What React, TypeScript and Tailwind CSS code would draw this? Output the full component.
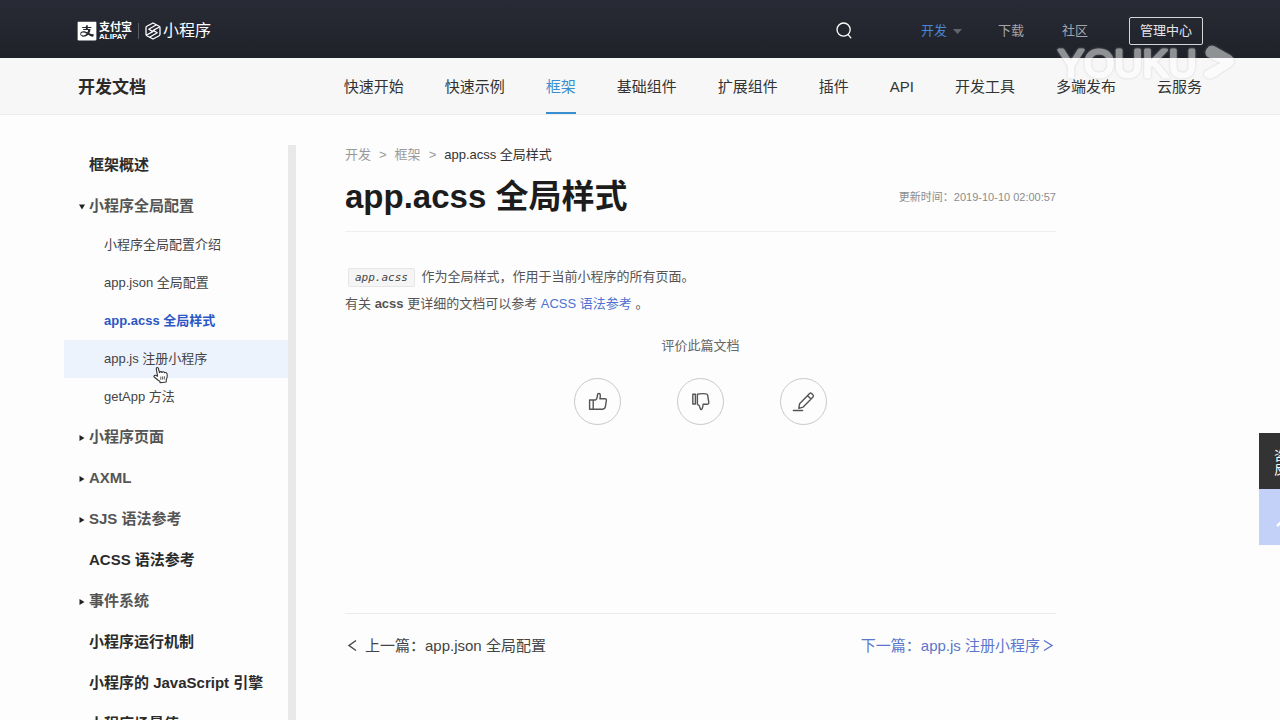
import { AiFillAlipaySquare } from "react-icons/ai";

type Doc = {
  title: string;
  kind: "page" | "open" | "closed";
  children?: string[];
};

const tabs = [
  "快速开始",
  "快速示例",
  "框架",
  "基础组件",
  "扩展组件",
  "插件",
  "API",
  "开发工具",
  "多端发布",
  "云服务",
];

const docs: Doc[] = [
  { title: "框架概述", kind: "page" },
  {
    title: "小程序全局配置",
    kind: "open",
    children: [
      "小程序全局配置介绍",
      "app.json 全局配置",
      "app.acss 全局样式",
      "app.js 注册小程序",
      "getApp 方法",
    ],
  },
  { title: "小程序页面", kind: "closed" },
  { title: "AXML", kind: "closed" },
  { title: "SJS 语法参考", kind: "closed" },
  { title: "ACSS 语法参考", kind: "page" },
  { title: "事件系统", kind: "closed" },
  { title: "小程序运行机制", kind: "page" },
  { title: "小程序的 JavaScript 引擎", kind: "page" },
  { title: "小程序场景值", kind: "page" },
];

const activeDoc = "app.acss 全局样式";
const hoveredDoc = "app.js 注册小程序";

function Logo() {
  return (
    <a href="#" className="flex items-center text-white">
      <AiFillAlipaySquare className="-ml-0.5 size-6" />
      <span className="flex flex-col">
        <span className="text-[11px] leading-3 font-bold">支付宝</span>
        <span className="text-[8px] leading-2 font-bold">ALIPAY</span>
      </span>
      <span className="mx-1.5 h-4 w-px bg-[#5a5c64]" />
      <svg
        viewBox="0 0 16 18"
        className="h-[18px] w-4"
        fill="none"
        stroke="currentColor"
        strokeWidth="1.3"
        strokeLinejoin="round"
        strokeLinecap="round"
      >
        <path d="M8 1 14.2 4.3Q15 4.8 15 5.7V12.3Q15 13.2 14.2 13.7L8 17 1.8 13.7Q1 13.2 1 12.3V5.7Q1 4.8 1.8 4.3Z" />
        <path d="M14.4 5 8.2 8.4 12.2 10.8 5 15M1.6 13 7.8 9.6 3.8 7.2 11 3" />
      </svg>
      <span className="pl-0.5 text-base leading-6">小程序</span>
    </a>
  );
}

function Header() {
  return (
    <header className="flex h-[58px] shrink-0 items-center bg-linear-to-b from-[#282b35] to-[#20222a] px-[77px] pt-1 text-[13px] text-[#a3a5aa]">
      <Logo />
      <nav className="ml-auto flex items-center">
        <button aria-label="搜索" className="mr-[69px] text-white">
          <svg
            viewBox="0 0 16 18"
            className="h-[18px] w-4"
            fill="none"
            stroke="currentColor"
            strokeWidth="1.3"
            strokeLinecap="round"
          >
            <circle cx="7.6" cy="7.6" r="6.6" />
            <path d="m12.2 12.6 2.6 3.2" />
          </svg>
        </button>
        <a href="#" className="mr-9 flex items-center gap-1.5 text-[#4a86cf]">
          开发
          <svg viewBox="0 0 9 5" className="h-[5px] w-[9px]" fill="#62656c">
            <path d="M0 0h9L4.5 5z" />
          </svg>
        </a>
        <a href="#" className="mr-[38px]">
          下载
        </a>
        <a href="#" className="mr-[41px]">
          社区
        </a>
        <button className="h-7 rounded-xs border border-[#d5d6d9] px-2.5 text-[#e4e5e7]">
          管理中心
        </button>
      </nav>
    </header>
  );
}

function TabBar() {
  return (
    <div className="flex h-[57px] shrink-0 items-center justify-between border-b border-[#ececec] bg-[#f7f7f7] px-[78px]">
      <h2 className="pt-1 text-[17px] font-bold text-[#2b2b2b]">开发文档</h2>
      <nav className="flex h-full gap-[41px] text-[15px] text-[#333]">
        {tabs.map((tab) => (
          <a
            key={tab}
            href="#"
            className={
              tab === "框架"
                ? "flex items-center border-b-2 border-[#3a8fd0] pt-1 text-[#3a8fd0]"
                : "flex items-center border-b-2 border-transparent pt-1"
            }
          >
            {tab}
          </a>
        ))}
      </nav>
    </div>
  );
}

function HandCursor() {
  return (
    <svg
      viewBox="0 0 16 18"
      className="absolute top-[26px] left-[89px] h-[18px] w-4"
      fill="#fff"
      stroke="#333"
      strokeWidth="1.1"
      strokeLinejoin="round"
    >
      <path d="M4.6 10.2 3.3 3.2C3 1.3 5 .9 5.4 2.5L6.5 6.6C6.8 5.4 8.6 5.3 9 6.5 9.6 5.5 11.2 5.6 11.6 6.8 12.6 6.1 14 6.7 14.1 8 14.4 10 14.2 12 13.3 13.6L13.2 16 7.2 16.8 6.8 15.2C5 14.4 3.4 12.6 1.5 11.3.4 10.4 1.3 8.8 2.7 9.3Z" />
      <path d="M7.8 10.6v3.2M9.6 10.4v3.2M11.4 10.2v3.2" strokeWidth=".8" />
    </svg>
  );
}

function Arrow({ open }: { open: boolean }) {
  return (
    <svg viewBox="0 0 6 6" className="mr-1 size-1.5" fill="#222">
      <path d={open ? "M0 .5h6L3 5.5z" : "M.5 0v6L5.5 3z"} />
    </svg>
  );
}

function Sidebar() {
  return (
    <aside className="ml-16 flex w-[232px] shrink-0 overflow-hidden border-r-8 border-[#e9e9e9]">
      <ul className="w-full">
        {docs.map((doc) => (
          <li key={doc.title}>
            <a
              href="#"
              className={
                doc.kind === "page"
                  ? "flex h-[41px] items-center pl-[25px] text-[15px] font-bold text-[#2b2b2b]"
                  : "flex h-[41px] items-center pl-[15px] text-[15px] font-bold text-[#555]"
              }
            >
              {doc.kind !== "page" && <Arrow open={doc.kind === "open"} />}
              {doc.title}
            </a>
            {doc.children && (
              <ul className="-mt-px pb-px text-[13px] text-[#444]">
                {doc.children.map((name) => (
                  <li key={name} className="relative">
                    <a
                      href="#"
                      className={
                        name === activeDoc
                          ? "flex h-[38px] items-center pl-10 font-bold text-[#2a56c6]"
                          : name === hoveredDoc
                            ? "flex h-[38px] items-center bg-[#edf3fd] pl-10"
                            : "flex h-[38px] items-center pl-10"
                      }
                    >
                      {name}
                    </a>
                    {name === hoveredDoc && <HandCursor />}
                  </li>
                ))}
              </ul>
            )}
          </li>
        ))}
      </ul>
    </aside>
  );
}

const roundButton =
  "flex size-[47px] items-center justify-center rounded-full border border-[#c9c9c9] text-[#555]";

function Feedback() {
  return (
    <section className="mt-4 text-center">
      <p className="text-[13px] leading-[26px] text-[#666]">评价此篇文档</p>
      <div className="mt-[19px] flex justify-center gap-14">
        <button aria-label="有用" className={roundButton}>
          <svg
            viewBox="0 0 20 20"
            className="size-5"
            fill="none"
            stroke="currentColor"
            strokeWidth="1.4"
            strokeLinejoin="round"
          >
            <path d="M1.6 8h3.600v9.200H1.600zM5.200 8h2.400C9.200 7 9.400 5 9.500 2.800 9.600 1 12.200 1 12.300 3c.1 1.500-.1 2.600-.4 3.800h5.300c.8 0 1.300.6 1.200 1.400l-.9 6c-.3 1.800-1.200 3-2.800 3H5.200z" />
          </svg>
        </button>
        <button aria-label="没用" className={roundButton}>
          <svg
            viewBox="0 0 20 20"
            className="size-5"
            fill="none"
            stroke="currentColor"
            strokeWidth="1.4"
            strokeLinejoin="round"
          >
            <path d="M1.8 2.2h2.600v9.800H1.800zM6.400 2.200C9 1.500 12.600 1.500 15 1.900c.9.100 1.500.7 1.700 1.500l1.100 7c.2 1-.4 1.800-1.400 1.800h-4.300c-.1 1.800-.5 3.400-1.100 4.700-.7 1-1.500.7-1.700-.3-.3-1.800-1.100-3.500-2.900-4.400z" />
          </svg>
        </button>
        <button aria-label="反馈意见" className={roundButton}>
          <svg
            viewBox="0 0 24 22"
            className="h-[22px] w-6"
            fill="none"
            stroke="currentColor"
            strokeWidth="1.4"
            strokeLinejoin="round"
            strokeLinecap="round"
          >
            <path d="m6.8 17.400.8-4.600L17.600 2.600q1-1 2 0l1.400 1.400q1 1 0 2L11 16.200zM15.600 4.700l3.400 3.400" />
            <path d="M1.500 19.500h9" strokeWidth="1.6" />
          </svg>
        </button>
      </div>
    </section>
  );
}

function Article() {
  return (
    <main className="mr-56 ml-[49px] flex-1">
      <nav className="flex gap-2 text-[13px] leading-5 text-[#999]">
        <a href="#">开发</a>
        <span>&gt;</span>
        <a href="#">框架</a>
        <span>&gt;</span>
        <span className="text-[#333]">{activeDoc}</span>
      </nav>
      <div className="flex h-[67px] items-center justify-between border-b border-[#efefef] pb-0.5">
        <h1 className="text-[33px] leading-[62px] font-bold text-[#1c1c1c]">
          {activeDoc}
        </h1>
        <time className="text-[11px] text-[#8c8c8c]">
          更新时间：2019-10-10 02:00:57
        </time>
      </div>
      <div className="mt-8 text-[13px] leading-[26px] text-[#555]">
        <p>
          <code className="mx-[3px] rounded-xs border border-[#e6e6e6] bg-[#f5f5f5] px-1.5 py-0.5 font-['DejaVu_Sans_Mono',monospace] text-[11px] text-[#444] italic">
            app.acss
          </code>{" "}
          作为全局样式，作用于当前小程序的所有页面。
        </p>
        <p>
          有关 <strong>acss</strong> 更详细的文档可以参考{" "}
          <a href="#" className="text-[#4f72d2]">
            ACSS 语法参考
          </a>{" "}
          。
        </p>
      </div>
      <Feedback />
      <div className="mt-[188px] flex justify-between border-t border-[#ebebeb] pt-5 text-[15px] leading-6">
        <a href="#" className="flex items-center gap-1 text-[#444]">
          <Chevron d="M11 2.500 4 7.500l7 5" />
          上一篇：app.json 全局配置
        </a>
        <a href="#" className="flex items-center text-[#5b76cc]">
          下一篇：app.js 注册小程序
          <Chevron d="m4 2.500 8 5-8 5" />
        </a>
      </div>
    </main>
  );
}

function Chevron({ d }: { d: string }) {
  return (
    <svg
      viewBox="0 0 16 16"
      className="size-4"
      fill="none"
      stroke="currentColor"
      strokeWidth="1.4"
    >
      <path d={d} />
    </svg>
  );
}

// floating help buttons, mostly slid off the right edge
function SideTools() {
  return (
    <div className="absolute top-[433px] -right-[35px] w-14">
      <button className="flex size-14 items-center justify-center bg-[#333] pt-1 text-center text-[13px] leading-[14px] text-white">
        咨询
        <br />
        反馈
      </button>
      <button
        aria-label="返回顶部"
        className="flex size-14 items-center justify-center bg-[#c3d0f8] pt-2 text-white"
      >
        <svg
          viewBox="0 0 22 12"
          className="h-3 w-[22px]"
          fill="none"
          stroke="currentColor"
          strokeWidth="2.5"
        >
          <path d="m1 11 10-9 10 9" />
        </svg>
      </button>
    </div>
  );
}

function Watermark() {
  return (
    <svg
      viewBox="0 0 186 44"
      className="pointer-events-none absolute top-10 right-10 h-11 w-[186px] opacity-50 drop-shadow-[0_0_1px_#aaa]"
      fill="#fff"
      stroke="#fff"
      strokeLinejoin="round"
      strokeLinecap="round"
    >
      <text
        x="4"
        y="37"
        strokeWidth="3"
        className="font-['Liberation_Sans',Arial,sans-serif] text-[39px]"
      >
        YOUKU
      </text>
      <path
        d="M155 7q3-2 6 0l16 9q6 5 0 10l-17 11q-6 3-9-1-2-4 3-6l13-7-14-7q-3-5 2-9z"
        strokeWidth="1"
      />
    </svg>
  );
}

export default function App() {
  return (
    <div className="relative flex h-screen flex-col overflow-hidden bg-[#fdfdfd] font-['Liberation_Sans','Noto_Sans_CJK_SC',sans-serif]">
      <Header />
      <TabBar />
      <div className="flex min-h-0 flex-1 pt-[30px]">
        <Sidebar />
        <Article />
      </div>
      <Watermark />
      <SideTools />
    </div>
  );
}
